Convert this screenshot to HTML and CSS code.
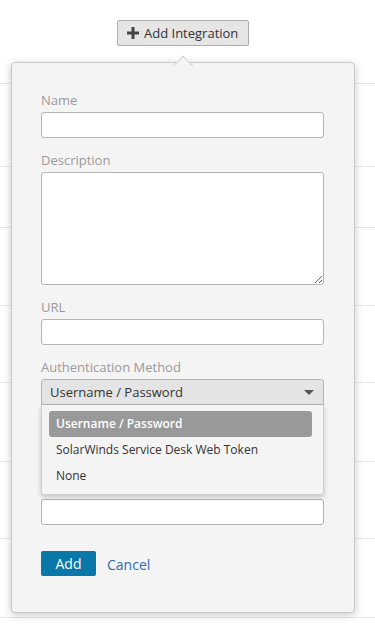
FILE: index.html
```html
<!DOCTYPE html>
<html>
  <head>
    <meta charset="utf-8">
    <meta name="viewport" content="width=device-width, initial-scale=1">
    <title>Add Integration</title>
    <link rel="stylesheet" href="styles.css">
  </head>
  <body>
    <div class="page">
      <div class="toolbar">
        <button class="btn_add">
          <svg class="plus" width="12" height="12" viewBox="0 0 12 12"><path d="M4.5 0h3v4.5H12v3H7.5V12h-3V7.5H0v-3h4.5z" fill="#444"/></svg>
          Add Integration
        </button>
      </div>

      <div class="rows">
        <div class="row r1"></div>
        <div class="row r2"></div>
        <div class="row r3"></div>
        <div class="row r4"></div>
        <div class="row r5"></div>
        <div class="row r6"></div>
        <div class="row r7"></div>
      </div>

      <div class="popover">
        <div class="arrow"></div>
        <form class="form">
          <label class="lbl">Name</label>
          <input class="field" type="text">

          <label class="lbl">Description</label>
          <textarea class="field area"></textarea>

          <label class="lbl">URL</label>
          <input class="field" type="text">

          <label class="lbl">Authentication Method</label>
          <div class="select_wrap">
            <div class="select">
              <span>Username / Password</span>
              <span class="caret"></span>
            </div>
            <div class="menu">
              <div class="opt active">Username / Password</div>
              <div class="opt">SolarWinds Service Desk Web Token</div>
              <div class="opt">None</div>
            </div>
          </div>

          <!-- these two labels sit under the open menu -->
          <label class="lbl covered">Username</label>
          <input class="field" type="text">

          <label class="lbl covered">Password</label>
          <input class="field" type="password">

          <div class="actions">
            <button type="button" class="btn_primary">Add</button>
            <a href="#" class="cancel">Cancel</a>
          </div>
        </form>
      </div>
    </div>
  </body>
</html>
```

FILE: styles.css
```css
* {
  margin: 0;
  padding: 0;
  box-sizing: border-box;
}

body {
  background: #fff;
  font-family: 'Open Sans', 'Liberation Sans', sans-serif;
  font-size: 13px;
  color: #333;
}

.page {
  position: relative;
  height: 639px;
  overflow: hidden;
}

.toolbar {
  height: 84px;
  border-bottom: 1px solid #e6e6e6;
  padding: 20px 0 0 117px;
}

.btn_add {
  display: flex;
  align-items: center;
  gap: 5px;
  width: 132px;
  height: 26px;
  padding: 0 0 0 9px;
  background: #e5e5e5;
  border: 1px solid #acacac;
  border-radius: 2px;
  font-family: inherit;
  font-size: 13px;
  color: #333;
}

.row {
  border-bottom: 1px solid #e6e6e6;
}
.r1 { height: 83px; }
.r2 { height: 61px; }
.r3 { height: 78px; }
.r4 { height: 77px; }
.r5 { height: 79px; }
.r6 { height: 77px; }
.r7 { height: 79px; }

.popover {
  position: absolute;
  top: 62px;
  left: 11px;
  width: 344px;
  height: 551px;
  background: #f4f4f4;
  border: 1px solid #c8c8c8;
  border-radius: 4px;
  box-shadow: 0 2px 8px rgba(0, 0, 0, 0.22);
}

.arrow {
  position: absolute;
  top: -11px;
  left: 161px;
  width: 20px;
  height: 20px;
  background: #f4f4f4;
  border-left: 1px solid #c8c8c8;
  border-top: 1px solid #c8c8c8;
  transform: translateY(4px) rotate(45deg) scale(0.72);
}

.form {
  display: flex;
  flex-direction: column;
  padding: 28px 30px 0 29px;
}

.lbl {
  color: #9a9a9a;
  line-height: 18px;
  margin-bottom: 3px;
}

.covered {
  visibility: hidden;
}

.field {
  height: 26px;
  background: #fff;
  border: 1px solid #b4b4b4;
  border-radius: 3px;
  margin-bottom: 13px;
  font-family: inherit;
}

.area {
  height: 113px;
  resize: vertical;
}

.select_wrap {
  position: relative;
  margin-bottom: 13px;
}

.select {
  display: flex;
  justify-content: space-between;
  align-items: center;
  height: 26px;
  padding: 0 9px 0 8px;
  background: #e4e4e4;
  border: 1px solid #b4b4b4;
  border-radius: 3px 3px 0 0;
  color: #333;
}

.caret {
  width: 0;
  height: 0;
  border-left: 5px solid transparent;
  border-right: 5px solid transparent;
  border-top: 5px solid #555;
}

.menu {
  position: absolute;
  top: 26px;
  left: 0;
  right: 0;
  z-index: 2;
  padding: 6px 11px 5px 7px;
  background: #f4f4f4;
  border: 1px solid #d0d0d0;
  border-top: 0;
  border-radius: 0 0 3px 3px;
  box-shadow: 0 2px 5px rgba(0, 0, 0, 0.2);
}

.opt {
  height: 26px;
  line-height: 26px;
  padding-left: 7px;
  font-size: 12px;
  color: #333;
}

.opt.active {
  background: #999;
  color: #fff;
  font-weight: 600;
  border-radius: 3px;
}

.actions {
  display: flex;
  align-items: center;
  gap: 11px;
  margin-top: 13px;
}

.btn_primary {
  width: 55px;
  height: 25px;
  background: #0a77a9;
  border: 0;
  border-radius: 2px;
  color: #fff;
  font-family: inherit;
  font-size: 14px;
}

.cancel {
  color: #2d6cb8;
  text-decoration: none;
  font-size: 14px;
  padding-top: 2px;
}
```
